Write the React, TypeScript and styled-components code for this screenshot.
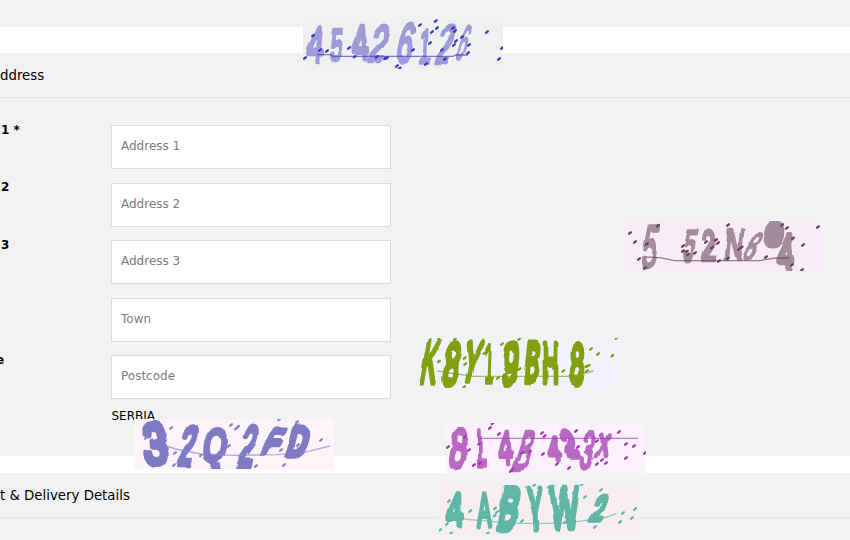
import React from 'react';
import styled, { createGlobalStyle } from 'styled-components';

const GlobalStyle = createGlobalStyle`
  * { box-sizing: border-box; }
  body { margin: 0; background: #fff; overflow: hidden; font-family: "DejaVu Sans", sans-serif; color: #000; }
`;
const Page = styled.main`
  position: relative;
  width: 850px;
  height: 540px;
  overflow: hidden;
  display: flex;
  flex-direction: column;
`;
const Panel = styled.section<{ $h: number; $gap: number }>`
  flex: none;
  height: ${p => p.$h}px;
  margin-bottom: ${p => p.$gap}px;
  background: #f2f2f2;
`;
const PanelTitle = styled.h2`
  margin: 0;
  height: 45px;
  border-bottom: 1px solid #e5e5e5;
  font-size: 13.33px;
  font-weight: 400;
  line-height: 45px;
  white-space: pre;
`;
const Form = styled.div`
  padding-top: 27px;
  display: grid;
  grid-auto-rows: 43.5px;
  row-gap: 14px;
`;
const Row = styled.label`
  display: grid;
  grid-template-columns: 111px 280px;
`;
const Label = styled.span<{ $shift: number }>`
  margin-left: ${p => p.$shift}px;
  font-size: 12px;
  font-weight: 700;
  line-height: 14px;
  margin-top: -2.1px;
`;
const Field = styled.input`
  height: 44px;
  width: 280px;
  padding: 0 9px 2px;
  border: 1px solid #dcdcdc;
  border-radius: 0;
  background: #fff;
  font: 12px "DejaVu Sans", sans-serif;
  outline: none;
  &::placeholder { color: #7b7b7b; opacity: 1; }
`;
const Country = styled.div`
  margin: -5px 0 0 111.5px;
  font-size: 12px;
  line-height: 16px;
`;
const Stamp = styled.svg<{ $x: number; $y: number; $bg: string }>`
  position: absolute;
  left: ${p => p.$x}px;
  top: ${p => p.$y}px;
  width: 200px;
  height: 50px;
  overflow: hidden;
  background: ${p => p.$bg};
`;

// Character, left, top, width, height, slant in degrees, stroke thickness.
type Glyph = [string, number, number, number, number, number, number];
type Noise = {
  x: number; y: number; bg: string; ink: string; dot: string;
  line: string; glyphs: Glyph[]; dots: number[][];
};

const rows: [string, string, number][] = [
  ['1 *', 'Address 1', 1], ['2', 'Address 2', 1], ['3', 'Address 3', 1],
  ['', 'Town', 0], ['e', 'Postcode', -4],
];

const stamps: Noise[] = [
  {
    x: 303, y: 19, bg: '#f0f0f0', ink: '#9d9bd8', dot: '#3f37bd',
    line: 'M42 107H82L90 112H450L458 108H495',
    glyphs: [['4', 14, 14, 50, 120, -4, 13], ['5', 84, 24, 38, 106, -5, 12], ['4', 146, 12, 50, 116, 3, 14],
      ['2', 206, 14, 50, 118, -16, 14], ['6', 288, 4, 44, 130, -12, 13], ['1', 350, 24, 36, 114, -2, 11],
      ['2', 410, 12, 42, 128, -14, 14], ['6', 472, 12, 26, 114, -16, 9]],
    dots: [[30, 50], [6, 117], [51, 93], [72, 96], [138, 87], [155, 113], [221, 114], [246, 118], [252, 117], [282, 141], [290, 148], [330, 93], [351, 18], [398, 6], [402, 27], [387, 39], [381, 72], [369, 135], [417, 93], [426, 120], [450, 27], [456, 36], [459, 66], [453, 78], [477, 54], [498, 78], [495, 102], [552, 39], [588, 120], [597, 87]],
  },
  {
    x: 623, y: 221, bg: '#f8edf4', ink: '#a28c9c', dot: '#693e61',
    line: 'M66 108L110 110L154 119H410L456 111H500',
    glyphs: [['5', 62, 6, 44, 138, -10, 12], ['5', 184, 18, 36, 104, -10, 12], ['2', 234, 20, 44, 104, 2, 14],
      ['N', 306, 16, 58, 106, -6, 12], ['8', 378, 30, 32, 92, -26, 9], ['9', 424, -4, 62, 86, -5, 38], ['4', 462, 32, 54, 122, 0, 18]],
    dots: [[21, 36], [36, 63], [48, 114], [66, 141], [72, 69], [105, 14], [180, 75], [180, 90], [192, 91], [195, 100], [216, 96], [249, 63], [267, 80], [279, 57], [285, 66], [288, 120], [315, 12], [315, 112], [348, 84], [356, 79], [429, 108], [477, 12], [492, 21], [510, 52], [507, 132], [537, 147], [540, 72], [585, 18]],
  },
  {
    x: 420, y: 338, bg: '#f2f2fc', ink: '#82a010', dot: '#7f9d11',
    line: 'M52 99L90 105L160 115H450L495 105L520 99',
    glyphs: [['K', 8, -4, 50, 146, -10, 17], ['8', 74, 4, 50, 144, -9, 20], ['Y', 134, 0, 50, 136, -12, 16],
      ['1', 192, 8, 32, 132, -2, 10], ['9', 250, 2, 48, 150, -6, 21], ['B', 314, 2, 50, 138, -6, 20],
      ['H', 368, 2, 50, 140, 0, 21], ['8', 450, 6, 44, 138, -1, 20]],
    dots: [[58, 0], [105, 3], [57, 70], [84, 73], [134, 60], [136, 78], [132, 147], [194, 45], [246, 18], [234, 120], [298, 3], [299, 93], [334, 24], [332, 48], [402, 90], [430, 99], [513, 33], [506, 83], [499, 85], [501, 99], [534, 48], [577, 53], [590, 0]],
  },
  {
    x: 134, y: 419, bg: '#fdf4fa', ink: '#807ac5', dot: '#8883ce',
    line: 'M86 78L125 90L200 105L300 109L430 107L520 98L588 81',
    glyphs: [['3', 26, 4, 76, 142, 4, 21], ['2', 140, 10, 48, 134, -12, 20], ['Q', 212, 18, 66, 116, -8, 19],
      ['2', 322, 8, 48, 142, -12, 20], ['F', 398, 22, 48, 90, -24, 17], ['D', 464, 12, 66, 108, -14, 22]],
    dots: [[36, 57], [111, 27], [123, 102], [120, 138], [201, 109], [251, 137], [285, 81], [291, 18], [306, 29], [312, 23], [366, 141], [441, 93], [450, 138], [436, 1], [489, 9], [492, 78], [561, 63]],
  },
  {
    x: 446, y: 423, bg: '#fcf0ff', ink: '#b86ac3', dot: '#a436b6',
    line: 'M94 46H576',
    glyphs: [['8', 14, 10, 52, 130, -7, 15], ['L', 94, 12, 32, 124, 0, 17], ['4', 156, 16, 42, 112, 4, 13],
      ['B', 216, 12, 48, 134, -18, 13], ['4', 302, 34, 42, 84, 8, 15], ['2', 344, 14, 44, 96, 20, 22],
      ['3', 408, 14, 38, 126, -10, 13], ['X', 454, 28, 40, 76, -16, 13]],
    dots: [[6, 72], [57, 42], [69, 81], [99, 62], [84, 126], [102, 120], [132, 15], [140, 1], [159, 33], [195, 144], [199, 139], [228, 90], [252, 86], [288, 30], [296, 39], [291, 93], [333, 123], [369, 135], [390, 24], [396, 72], [453, 54], [453, 123], [468, 111], [480, 120], [519, 27], [540, 63], [540, 105], [564, 69], [597, 90]],
  },
  {
    x: 439, y: 484, bg: '#faedf2', ink: '#5fb6a5', dot: '#58b9a6',
    line: 'M55 101L88 107L135 110L210 118H370L440 109L495 102L532 89',
    glyphs: [['4', 24, 18, 50, 112, 0, 17], ['A', 114, 20, 44, 112, 0, 15], ['B', 180, -2, 66, 148, -10, 25],
      ['Y', 262, 0, 50, 144, 3, 21], ['W', 330, 0, 92, 140, 0, 19], ['2', 460, 26, 46, 92, -18, 17]],
    dots: [[3, 138], [24, 120], [36, 148], [30, 51], [94, 81], [168, 73], [174, 84], [167, 95], [146, 148], [249, 111], [276, 21], [286, 3], [330, 9], [430, 0], [438, 39], [486, 18], [378, 115], [468, 129], [543, 114], [552, 87], [579, 102], [588, 75]],
  },
];

const Character = ({ glyph, ink }: { glyph: Glyph; ink: string }) => {
  const [char, x, y, w, h, slant, stroke] = glyph;
  const innerH = h - stroke;
  const size = innerH / 0.71;
  const em = char === 'W' ? 0.91 : /[YKAXB]/.test(char) ? 0.6 : /[NHDQ]/.test(char) ? 0.65 : 0.47;
  const ratio = w / (size * em + stroke);
  const bottom = y + h - stroke / 2;
  const lean = (h / 2) * Math.tan((slant * Math.PI) / 180);
  return (
    <text
      transform={`translate(${x + w / 2 + lean} ${bottom}) skewX(${slant}) scale(${ratio} 1)`}
      textAnchor="middle"
      fontFamily="Liberation Sans, sans-serif"
      fontSize={size}
      fill={ink}
      stroke={ink}
      strokeWidth={stroke}
      strokeLinejoin="round"
    >{char}</text>
  );
};

const NoiseStamp = ({ data }: { data: Noise }) => (
  <Stamp $x={data.x} $y={data.y} $bg={data.bg} viewBox="0 0 600 150">
    <filter id={`wobble-${data.x}`} x="0" y="0" width="600" height="150" filterUnits="userSpaceOnUse" colorInterpolationFilters="sRGB">
      <feTurbulence type="fractalNoise" baseFrequency="0.02" numOctaves="1" seed={data.x % 9} />
      <feDisplacementMap in="SourceGraphic" scale="15" xChannelSelector="R" yChannelSelector="G" />
      <feGaussianBlur stdDeviation="1.6" />
    </filter>
    <g filter={`url(#wobble-${data.x})`}>
      {data.glyphs.map((g, i) => <Character key={i} glyph={g} ink={data.ink} />)}
    </g>
    <path d={data.line} fill="none" stroke={data.dot} strokeOpacity=".65" strokeWidth="4" />
    {data.dots.map(([x, y], i) => (
      <path key={i} d={`M${x - 2.5} ${y + 2}L${x + 2.5} ${y - 2}`} stroke={data.dot} strokeWidth="7" strokeLinecap="round" />
    ))}
  </Stamp>
);

export default function App() {
  return (
    <>
      <GlobalStyle />
      <Page>
        <Panel $h={27} $gap={26} />
        <Panel $h={403} $gap={17}>
          <PanelTitle>ddress</PanelTitle>
          <Form>
            {rows.map(([label, name, shift]) => (
              <Row key={name}>
                <Label $shift={shift}>{label}</Label>
                <Field placeholder={name} />
              </Row>
            ))}
            <Country>SERBIA</Country>
          </Form>
        </Panel>
        <Panel $h={67} $gap={0}>
          <PanelTitle>t &amp; Delivery Details</PanelTitle>
        </Panel>
        {stamps.map(s => <NoiseStamp key={s.x} data={s} />)}
      </Page>
    </>
  );
}
